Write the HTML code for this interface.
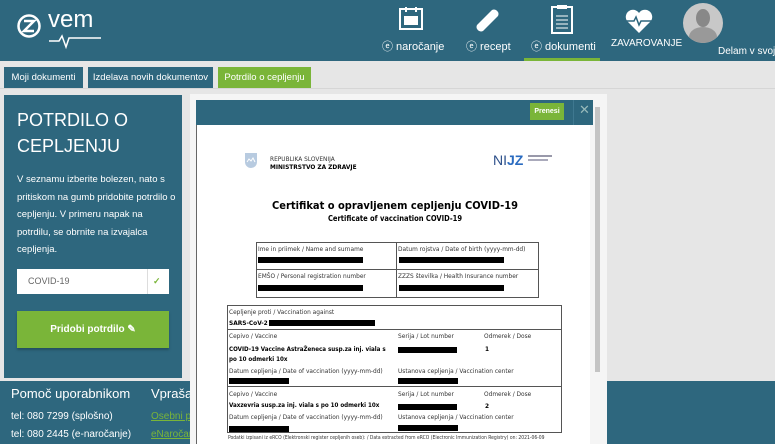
<!DOCTYPE html>
<html><head><meta charset="utf-8"><style>
*{margin:0;padding:0;box-sizing:border-box}
body{width:775px;height:444px;overflow:hidden;background:#e6e6e6;font-family:"Liberation Sans",sans-serif;position:relative}
.a{position:absolute;white-space:nowrap}
.hdr{left:0;top:0;width:775px;height:61px;background:#2e677e}
.nav{color:#fff;font-size:11px;top:38px}
.tab{top:67px;height:22px;background:#2e677e;color:#fff;font-size:9.5px;line-height:22px;text-align:center}
.lp{left:4px;top:95px;width:178px;height:283px;background:#2e677e;color:#fff}
.ft{left:0;top:381px;width:775px;height:63px;background:#2e677e;color:#fff}
.bar{background:#000;height:6px}
.d{font-size:6.5px;color:#333;font-family:"DejaVu Sans Condensed","Liberation Sans",sans-serif}
.b{font-weight:bold;color:#000}
</style></head><body>
<div class="a hdr"></div>
<svg class="a" style="left:16px;top:12px" width="86" height="38" viewBox="0 0 86 38">
<circle cx="13" cy="14" r="10.5" fill="none" stroke="#fff" stroke-width="2.5"/>
<path d="M8 9h10l-10 10h10" fill="none" stroke="#fff" stroke-width="2.5"/>
<path d="M33 29h10l3-5 4 11 3-9h32" fill="none" stroke="#fff" stroke-width="1.5"/>
</svg>
<div class="a" style="left:48px;top:6px;color:#fff;font-size:24px">vem</div>
<svg class="a" style="left:398px;top:6px" width="26" height="25"><rect x="2" y="3" width="22" height="20" fill="none" stroke="#fff" stroke-width="2"/><rect x="6" y="10" width="14" height="9" fill="#fff"/><path d="M8 1v5M18 1v5" stroke="#fff" stroke-width="2"/></svg>
<svg class="a" style="left:472px;top:4px" width="30" height="28"><path d="M5 21L20 6a4.5 4.5 0 0 1 6 6L11 27a4.5 4.5 0 0 1-6-6z" fill="#fff"/></svg>
<svg class="a" style="left:550px;top:4px" width="24" height="30"><rect x="2" y="3" width="20" height="26" fill="none" stroke="#fff" stroke-width="2"/><rect x="7" y="1" width="10" height="4" fill="#fff"/><path d="M6 12h12M6 16h12M6 20h12M6 24h12" stroke="#fff"/></svg>
<svg class="a" style="left:624px;top:8px" width="30" height="26"><path d="M15 25L3 13A7 7 0 0 1 15 5A7 7 0 0 1 27 13z" fill="#fff"/><path d="M2 13h8l2-4 3 8 2-4h11" fill="none" stroke="#2e677e" stroke-width="1.5"/></svg>
<div class="a" style="left:683px;top:3px;width:40px;height:40px;border-radius:50%;background:#c8c8c8;overflow:hidden"><div class="a" style="left:13px;top:6px;width:14px;height:18px;border-radius:50%;background:#888"></div><div class="a" style="left:6px;top:24px;width:28px;height:20px;border-radius:50% 50% 0 0;background:#999"></div></div>
<div class="a nav" style="left:382px">ⓔ naročanje</div>
<div class="a nav" style="left:466px">ⓔ recept</div>
<div class="a nav" style="left:531px">ⓔ dokumenti</div>
<div class="a nav" style="left:611px;font-size:10px">ZAVAROVANJE</div>
<div class="a nav" style="left:718px;top:46px;font-size:10px">Delam v svojem</div>
<div class="a" style="left:524px;top:58px;width:76px;height:3px;background:#7ab539"></div>
<div class="a tab" style="left:4px;width:79px">Moji dokumenti</div>
<div class="a tab" style="left:88px;width:125px">Izdelava novih dokumentov</div>
<div class="a tab" style="left:218px;width:93px;background:#7ab539">Potrdilo o cepljenju</div>
<div class="a" style="left:0;top:88px;width:775px;height:1px;background:#d6d6d6"></div>
<div class="a lp">
<div class="a" style="left:13px;top:12px;font-size:18px;line-height:26px">POTRDILO O<br>CEPLJENJU</div>
<div class="a" style="left:13px;top:76px;width:160px;font-size:9.5px;line-height:17.5px;white-space:normal">V seznamu izberite bolezen, nato s pritiskom na gumb pridobite potrdilo o cepljenju. V primeru napak na potrdilu, se obrnite na izvajalca cepljenja.</div>
<div class="a" style="left:13px;top:174px;width:152px;height:25px;background:#fff;color:#666;font-size:9px;line-height:25px;padding-left:11px">COVID-19<div class="a" style="left:130px;top:0;width:1px;height:25px;background:#ddd"></div><div class="a" style="left:136px;top:0;color:#7ab539;font-weight:bold">✓</div></div>
<div class="a" style="left:13px;top:216px;width:152px;height:37px;background:#7ab539;color:#fff;font-weight:bold;font-size:10px;line-height:37px;text-align:center;box-shadow:0 2px 2px #245060">Pridobi potrdilo ✎</div>
</div>
<div class="a ft">
<div class="a" style="left:11px;top:5px;font-size:13px">Pomoč uporabnikom</div>
<div class="a" style="left:11px;top:30px;font-size:10px">tel: 080 7299 (splošno)</div>
<div class="a" style="left:11px;top:48px;font-size:10px">tel: 080 2445 (e-naročanje)</div>
<div class="a" style="left:151px;top:5px;font-size:13px">Vprašanja</div>
<div class="a" style="left:151px;top:30px;font-size:10px;color:#7ab539;text-decoration:underline">Osebni p</div>
<div class="a" style="left:151px;top:48px;font-size:10px;color:#7ab539;text-decoration:underline">eNaročan</div>
</div>
<div class="a" style="left:190px;top:94px;width:417px;height:350px;background:#f5f5f5"></div>
<div class="a" style="left:196px;top:100px;width:397px;height:25px;background:#2e677e"></div>
<div class="a" style="left:530px;top:103px;width:34px;height:17px;background:#7ab539;color:#fff;font-size:7px;font-weight:bold;text-align:center;line-height:17px">Prenesi</div>
<div class="a" style="left:573px;top:100px;width:1px;height:25px;background:#3f7890"></div>
<div class="a" style="left:579px;top:102px;color:#9bb;font-size:13px">✕</div>
<div class="a" style="left:595px;top:107px;width:5px;height:265px;background:#c4c4c4"></div>
<div class="a" style="left:196px;top:125px;width:394px;height:319px;background:#fff;border-left:1px solid #666"></div>
<svg class="a" style="left:244px;top:152px" width="14" height="17"><path d="M1 1h12v9a6 6 0 0 1-12 0z" fill="#b8cbe0"/><path d="M3 10l2-3 2 2 2-3 2 4" fill="none" stroke="#fff"/></svg>
<div class="a d" style="left:270px;top:155px">REPUBLIKA SLOVENIJA</div>
<div class="a d b" style="left:270px;top:163px">MINISTRSTVO ZA ZDRAVJE</div>
<div class="a" style="left:493px;top:152px;font-size:14px;color:#2c4f8a">NI<b style="color:#2a6bc0">JZ</b></div>
<div class="a" style="left:528px;top:155px;width:24px;height:2px;background:#99a"></div>
<div class="a" style="left:528px;top:159px;width:20px;height:2px;background:#aab"></div>
<div class="a d b" style="left:190px;width:410px;text-align:center;top:199px;font-size:11px">Certifikat o opravljenem cepljenju COVID-19</div>
<div class="a d b" style="left:190px;width:410px;text-align:center;top:214px;font-size:7.5px">Certificate of vaccination COVID-19</div>
<div class="a" style="left:256px;top:242px;width:283px;height:56px;border:1px solid #555"></div>
<div class="a" style="left:396px;top:242px;width:1px;height:56px;background:#555"></div>
<div class="a" style="left:256px;top:269px;width:283px;height:1px;background:#555"></div>
<div class="a d" style="left:258px;top:245px">Ime in priimek / Name and surname</div>
<div class="a d" style="left:398px;top:245px">Datum rojstva / Date of birth (yyyy-mm-dd)</div>
<div class="a bar" style="left:258px;top:257px;width:105px"></div>
<div class="a bar" style="left:399px;top:257px;width:105px"></div>
<div class="a d" style="left:258px;top:272px">EMŠO / Personal registration number</div>
<div class="a d" style="left:398px;top:272px">ZZZS številka / Health Insurance number</div>
<div class="a bar" style="left:258px;top:285px;width:105px"></div>
<div class="a bar" style="left:399px;top:285px;width:105px"></div>
<div class="a" style="left:227px;top:305px;width:335px;height:128px;border:1px solid #555"></div>
<div class="a" style="left:227px;top:329px;width:335px;height:1px;background:#555"></div>
<div class="a" style="left:227px;top:386px;width:335px;height:1px;background:#555"></div>
<div class="a d" style="left:229px;top:308px">Cepljenje proti / Vaccination against</div>
<div class="a d b" style="left:229px;top:319px">SARS-CoV-2</div>
<div class="a bar" style="left:269px;top:320px;width:106px"></div>
<div class="a d" style="left:229px;top:332px">Cepivo / Vaccine</div>
<div class="a d" style="left:398px;top:332px">Serija / Lot number</div>
<div class="a d" style="left:484px;top:332px">Odmerek / Dose</div>
<div class="a d b" style="left:229px;top:345px;line-height:10px;font-size:6.2px">COVID-19 Vaccine AstraŽeneca susp.za inj. viala s<br>po 10 odmerki 10x</div>
<div class="a bar" style="left:398px;top:347px;width:59px"></div>
<div class="a d b" style="left:485px;top:345px">1</div>
<div class="a d" style="left:229px;top:367px">Datum cepljenja / Date of vaccination (yyyy-mm-dd)</div>
<div class="a d" style="left:398px;top:367px">Ustanova cepljenja / Vaccination center</div>
<div class="a bar" style="left:229px;top:378px;width:60px"></div>
<div class="a bar" style="left:398px;top:378px;width:60px"></div>
<div class="a d" style="left:229px;top:390px">Cepivo / Vaccine</div>
<div class="a d" style="left:398px;top:390px">Serija / Lot number</div>
<div class="a d" style="left:484px;top:390px">Odmerek / Dose</div>
<div class="a d b" style="left:229px;top:402px;font-size:6.2px">Vaxzevria susp.za inj. viala s po 10 odmerki 10x</div>
<div class="a bar" style="left:398px;top:404px;width:59px"></div>
<div class="a d b" style="left:485px;top:402px">2</div>
<div class="a d" style="left:229px;top:413px">Datum cepljenja / Date of vaccination (yyyy-mm-dd)</div>
<div class="a d" style="left:398px;top:413px">Ustanova cepljenja / Vaccination center</div>
<div class="a bar" style="left:229px;top:426px;width:60px"></div>
<div class="a bar" style="left:398px;top:425px;width:60px"></div>
<div class="a d" style="left:228px;top:435px;font-size:5px">Podatki izpisani iz eRCO (Elektronski register cepljenih oseb): / Data extracted from eRCO (Electronic Immunization Registry) on: 2021-06-09</div>
</body></html>
